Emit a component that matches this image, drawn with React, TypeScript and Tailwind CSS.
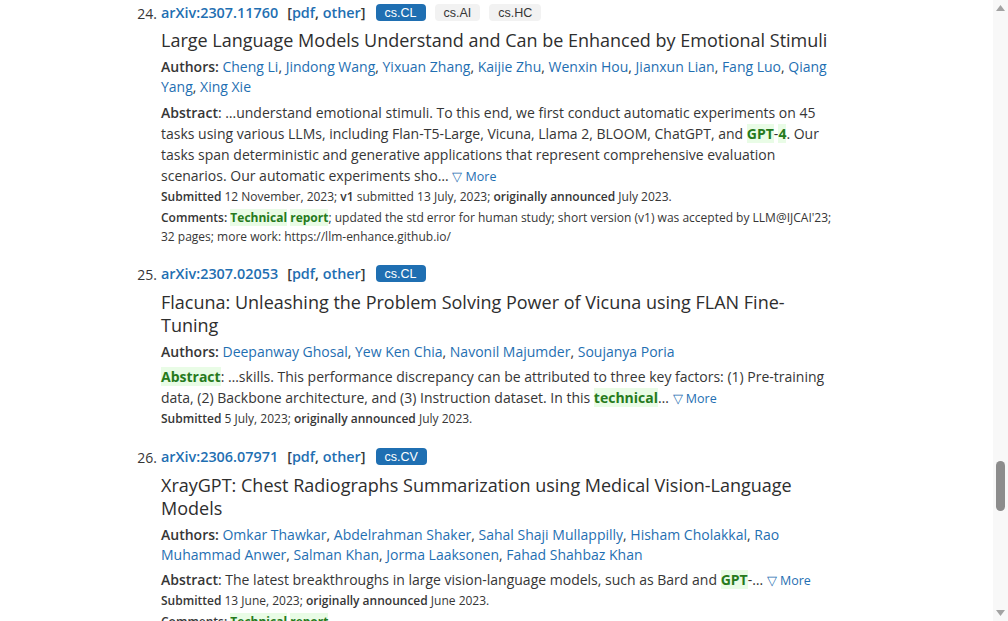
import React from "react";

const BLUE = "text-[#1f6fb2]";

function Hit({ children }: { children: React.ReactNode }) {
  return <span className="bg-[#e9fce6] text-[#267a1c] font-bold">{children}</span>;
}

function Tag({ label, primary }: { label: string; primary?: boolean }) {
  return (
    <span
      className={
        "inline-flex items-center h-[17px] px-[9px] rounded-[4px] text-[12.5px] font-normal leading-none ml-[9px] " +
        (primary ? "bg-[#1f6fb2] text-white" : "bg-[#f2f2f2] text-[#363636]")
      }
      style={{ fontFamily: '"Liberation Sans", Arial, sans-serif' }}
    >
      {label}
    </span>
  );
}

function Header({ num, id, tags }: { num: string; id: string; tags: [string, boolean][] }) {
  return (
    <div className="flex items-center h-[26px]">
      <div className="w-[28px] pr-[4px] text-right text-[14px] text-[#363636]">{num}</div>
      <div className="flex items-center text-[14.4px] font-semibold">
        <span className={BLUE}>{id}</span>
        <span className="ml-[9px] text-[#363636]">
          [<span className={BLUE}>pdf</span>, <span className={BLUE}>other</span>]
        </span>
        <span className="ml-[1px] flex">
          {tags.map(([t, p]) => (
            <Tag key={t} label={t} primary={p} />
          ))}
        </span>
      </div>
    </div>
  );
}

function Authors({ names }: { names: string[] }) {
  return (
    <p className="text-[14px] leading-[20px] text-[#363636] mt-[5px]">
      <span className="font-semibold">Authors: </span>
      {names.map((n, i) => (
        <React.Fragment key={n}>
          <span className={BLUE}>{n}</span>
          {i < names.length - 1 ? ", " : ""}
        </React.Fragment>
      ))}
    </p>
  );
}

function More() {
  return <span className={"text-[12.5px] " + BLUE}>▽ More</span>;
}

function Title({ children, first }: { children: React.ReactNode; first?: boolean }) {
  return (
    <h2
      className={
        "text-[18px] leading-[23px] font-medium text-[#2e2e2e] " + (first ? "mt-[3px]" : "mt-[4px]")
      }
    >
      {children}
    </h2>
  );
}

export default function App() {
  return (
    <div
      className="h-[621px] w-[1008px] overflow-hidden flex bg-white text-[#363636]"
      style={{ fontFamily: '"Open Sans", "Noto Sans", sans-serif' }}
    >
      <div className="flex-1 pl-[133px] pt-0">
        {/* Item 24 */}
        <div>
          <Header num="24." id="arXiv:2307.11760" tags={[["cs.CL", true], ["cs.AI", false], ["cs.HC", false]]} />
          <div className="pl-[28px] w-[705px]">
            <Title first>Large Language Models Understand and Can be Enhanced by Emotional Stimuli</Title>
            <Authors
              names={["Cheng Li", "Jindong Wang", "Yixuan Zhang", "Kaijie Zhu", "Wenxin Hou", "Jianxun Lian", "Fang Luo", "Qiang Yang", "Xing Xie"]}
            />
            <p className="text-[14px] leading-[21px] mt-[5px]">
              <span className="font-semibold">Abstract</span>: …understand emotional stimuli. To this end, we first conduct automatic experiments on 45 tasks using various LLMs, including Flan-T5-Large, Vicuna, Llama 2, BLOOM, ChatGPT, and <Hit>GPT</Hit>-<Hit>4</Hit>. Our tasks span deterministic and generative applications that represent comprehensive evaluation scenarios. Our automatic experiments sho… <More />
            </p>
            <p className="text-[12px] leading-[19px] mt-0">
              <span className="font-semibold">Submitted</span> 12 November, 2023; <span className="font-semibold">v1</span> submitted 13 July, 2023; <span className="font-semibold">originally announced</span> July 2023.
            </p>
            <p className="text-[12px] leading-[19px] mt-[2px]">
              <span className="font-semibold">Comments: </span>
              <Hit>Technical</Hit> <Hit>report</Hit>; updated the std error for human study; short version (v1) was accepted by LLM@IJCAI'23; 32 pages; more work: https://llm-enhance.github.io/
            </p>
          </div>
        </div>

        {/* Item 25 */}
        <div className="mt-[15px]">
          <Header num="25." id="arXiv:2307.02053" tags={[["cs.CL", true]]} />
          <div className="pl-[28px] w-[705px]">
            <Title>Flacuna: Unleashing the Problem Solving Power of Vicuna using FLAN Fine-Tuning</Title>
            <Authors names={["Deepanway Ghosal", "Yew Ken Chia", "Navonil Majumder", "Soujanya Poria"]} />
            <p className="text-[14px] leading-[21px] mt-[4px]">
              <Hit>Abstract</Hit>: …skills. This performance discrepancy can be attributed to three key factors: (1) Pre-training data, (2) Backbone architecture, and (3) Instruction dataset. In this <Hit>technical</Hit>… <More />
            </p>
            <p className="text-[12px] leading-[19px] mt-0">
              <span className="font-semibold">Submitted</span> 5 July, 2023; <span className="font-semibold">originally announced</span> July 2023.
            </p>
          </div>
        </div>

        {/* Item 26 */}
        <div className="mt-[16px]">
          <Header num="26." id="arXiv:2306.07971" tags={[["cs.CV", true]]} />
          <div className="pl-[28px] w-[705px]">
            <Title>XrayGPT: Chest Radiographs Summarization using Medical Vision-Language Models</Title>
            <Authors
              names={["Omkar Thawkar", "Abdelrahman Shaker", "Sahal Shaji Mullappilly", "Hisham Cholakkal", "Rao Muhammad Anwer", "Salman Khan", "Jorma Laaksonen", "Fahad Shahbaz Khan"]}
            />
            <p className="text-[14px] leading-[21px] mt-[4px]">
              <span className="font-semibold">Abstract</span>: The latest breakthroughs in large vision-language models, such as Bard and <Hit>GPT</Hit>-… <More />
            </p>
            <p className="text-[12px] leading-[19px] mt-0">
              <span className="font-semibold">Submitted</span> 13 June, 2023; <span className="font-semibold">originally announced</span> June 2023.
            </p>
            <p className="text-[12px] leading-[19px] mt-[2px]">
              <span className="font-semibold">Comments: </span>
              <Hit>Technical</Hit> <Hit>report</Hit>
            </p>
          </div>
        </div>
      </div>

      {/* Scrollbar */}
      <div className="w-[15px] h-full bg-[#f8f8f8] flex flex-col items-center">
        <svg width="9" height="6" viewBox="0 0 9 6" className="mt-[5px]">
          <polygon points="4.5,0 9,6 0,6" fill="#a3a3a3" />
        </svg>
        <div className="w-[9px] h-[50px] rounded-full bg-[#8c8c8c] mt-[450px]" />
        <div className="flex-1" />
        <svg width="9" height="6" viewBox="0 0 9 6" className="mb-[5px]">
          <polygon points="0,0 9,0 4.5,6" fill="#a3a3a3" />
        </svg>
      </div>
    </div>
  );
}
